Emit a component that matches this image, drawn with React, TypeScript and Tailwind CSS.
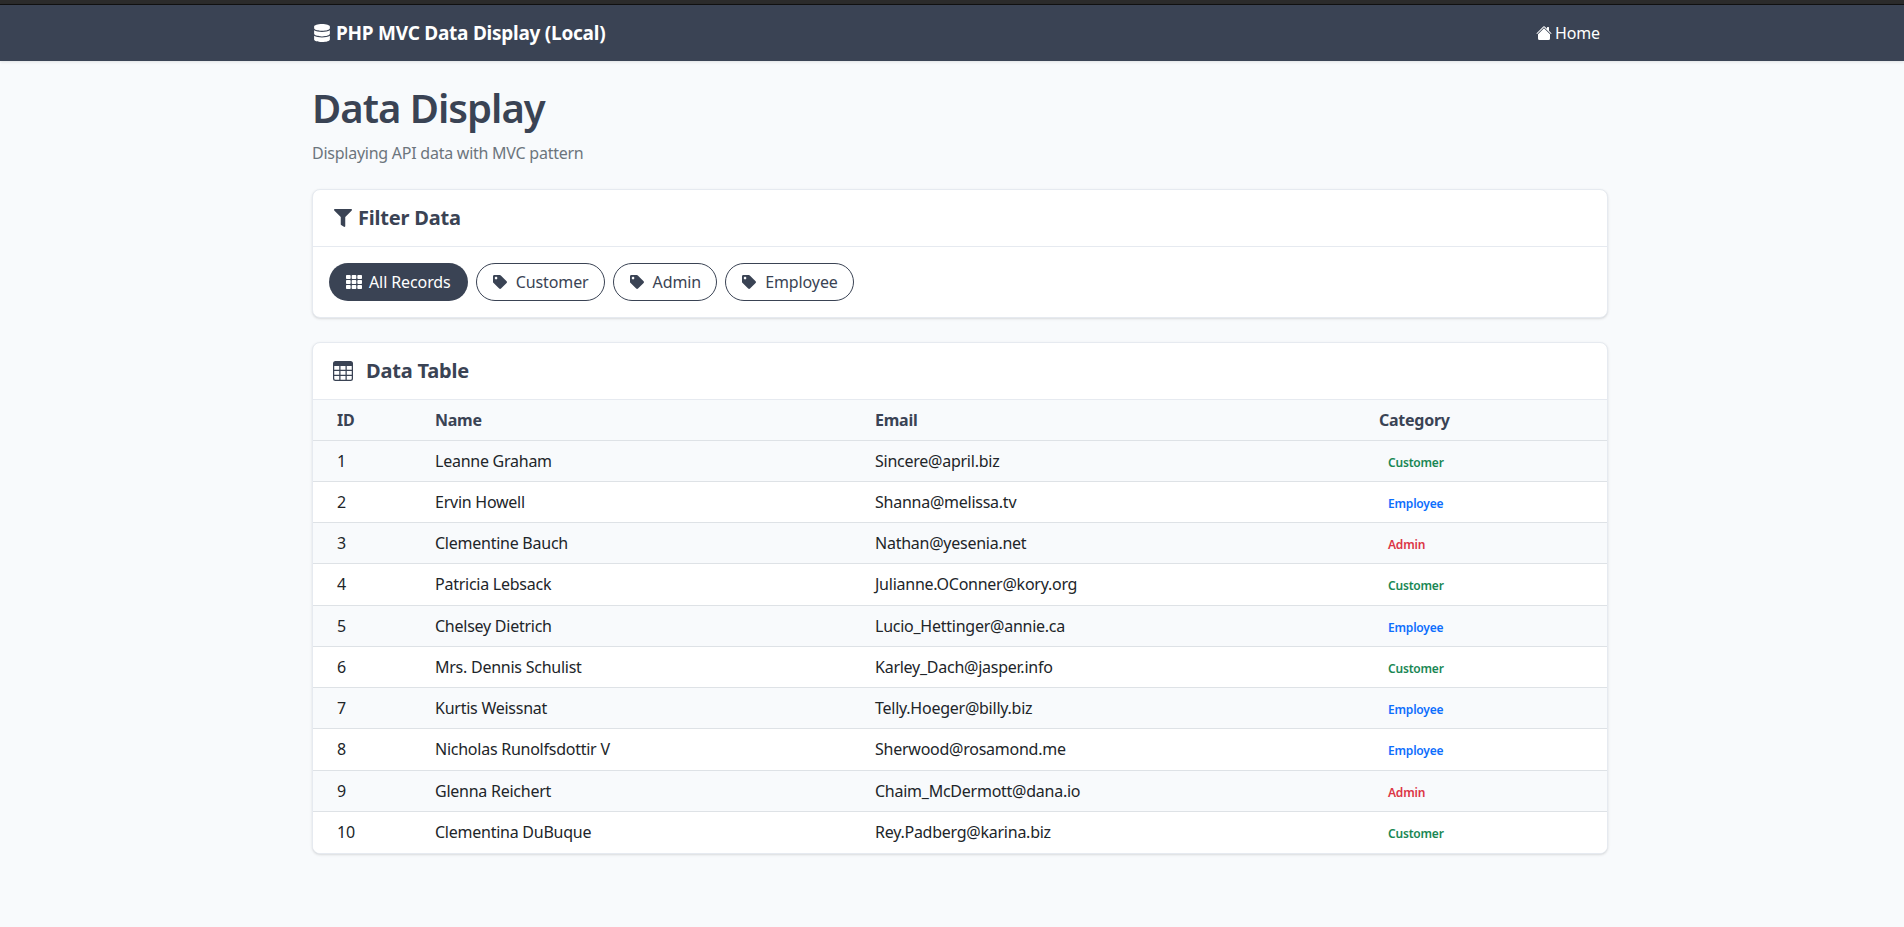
import { FaDatabase, FaFilter, FaTh, FaTag } from "react-icons/fa";
import { BsHouseFill, BsTable } from "react-icons/bs";

const rows: [number, string, string, string][] = [
  [1, "Leanne Graham", "Sincere@april.biz", "Customer"],
  [2, "Ervin Howell", "Shanna@melissa.tv", "Employee"],
  [3, "Clementine Bauch", "Nathan@yesenia.net", "Admin"],
  [4, "Patricia Lebsack", "Julianne.OConner@kory.org", "Customer"],
  [5, "Chelsey Dietrich", "Lucio_Hettinger@annie.ca", "Employee"],
  [6, "Mrs. Dennis Schulist", "Karley_Dach@jasper.info", "Customer"],
  [7, "Kurtis Weissnat", "Telly.Hoeger@billy.biz", "Employee"],
  [8, "Nicholas Runolfsdottir V", "Sherwood@rosamond.me", "Employee"],
  [9, "Glenna Reichert", "Chaim_McDermott@dana.io", "Admin"],
  [10, "Clementina DuBuque", "Rey.Padberg@karina.biz", "Customer"],
];

const badge: Record<string, string> = {
  Customer: "text-[#198754]",
  Employee: "text-[#0d6efd]",
  Admin: "text-[#dc3545]",
};

function Pill({ label }: { label: string }) {
  return (
    <button className="flex h-[38px] items-center gap-[9px] rounded-full border border-[#3a4354] bg-white pl-[16px] pr-[15px] text-[16px] tracking-[-0.1px] text-[#3a4354]">
      <FaTag className="h-[14px] w-[14px]" />
      {label}
    </button>
  );
}

export default function App() {
  return (
    <div className="min-h-[927px] overflow-hidden bg-[#f8fafc] font-['Noto_Sans',sans-serif] text-[16px] tracking-[-0.25px] text-[#212529]">
      <div className="h-[5px] border-b border-[#111] bg-[#2b2b2b]" />
      <nav className="h-[56px] bg-[#3a4354] shadow-[0_1px_3px_rgba(0,0,0,0.1)]">
        <div className="ml-[314px] flex h-full w-[1286px] items-center justify-between">
          <div className="flex items-center gap-[6px] text-[19px] font-bold tracking-[-0.25px] text-white">
            <FaDatabase className="h-[18px] w-[16px]" />
            PHP MVC Data Display (Local)
          </div>
          <div className="flex items-center gap-[3px] text-[16px] tracking-[-0.1px] text-white">
            <BsHouseFill className="h-[16px] w-[16px]" />
            Home
          </div>
        </div>
      </nav>
      <main className="ml-[312px] w-[1296px] pt-[23px]">
        <h1 className="text-[40px] leading-[48px] font-semibold tracking-[-1px] text-[#3a4354]">Data Display</h1>
        <p className="mt-[9px] text-[16px] leading-[24px] text-[#6c757d]">Displaying API data with MVC pattern</p>
        <section className="mt-[24px] h-[129px] rounded-lg border border-[#e6eaf0] bg-white shadow-sm">
          <div className="flex h-[57px] items-center gap-[6px] border-b border-[#e6eaf0] pl-[21px] text-[20px] font-bold tracking-[-0.2px] text-[#3a4354]">
            <FaFilter className="h-[18px] w-[18px]" />
            Filter Data
          </div>
          <div className="flex gap-2 pl-[16px] pt-[16px]">
            <button className="flex h-[38px] items-center gap-[7px] rounded-full bg-[#3a4354] px-[17px] text-[16px] tracking-[-0.1px] text-white">
              <FaTh className="h-[16px] w-[16px]" />
              All Records
            </button>
            <Pill label="Customer" />
            <Pill label="Admin" />
            <Pill label="Employee" />
          </div>
        </section>
        <section className="mt-[24px] overflow-hidden rounded-lg border border-[#e6eaf0] bg-white shadow-sm">
          <div className="flex h-[57px] items-center gap-[13px] border-b border-[#e6eaf0] pl-[20px] text-[20px] font-bold tracking-[-0.2px] text-[#3a4354]">
            <BsTable className="h-[20px] w-[20px]" />
            Data Table
          </div>
          <table className="w-full table-fixed border-collapse text-left">
            <colgroup>
              <col className="w-[98px]" />
              <col className="w-[440px]" />
              <col className="w-[504px]" />
              <col />
            </colgroup>
            <thead>
              <tr className="h-[40px] bg-[#f8fafc] font-bold text-[#3a4354]">
                <th className="pl-[24px]">ID</th>
                <th className="pl-[24px]">Name</th>
                <th className="pl-[24px]">Email</th>
                <th className="pl-[24px]">Category</th>
              </tr>
            </thead>
            <tbody>
              {rows.map((r, i) => (
                <tr key={r[0]} className={`h-[41.25px] border-t border-[#dee2e6] ${i % 2 === 0 ? "bg-[#f8fafc]" : "bg-white"}`}>
                  <td className="pl-[24px]">{r[0]}</td>
                  <td className="pl-[24px]">{r[1]}</td>
                  <td className="pl-[24px]">{r[2]}</td>
                  <td className="pl-[33px]">
                    <span className={`text-[12px] font-semibold tracking-[-0.2px] ${badge[r[3]]}`}>{r[3]}</span>
                  </td>
                </tr>
              ))}
            </tbody>
          </table>
        </section>
      </main>
    </div>
  );
}
